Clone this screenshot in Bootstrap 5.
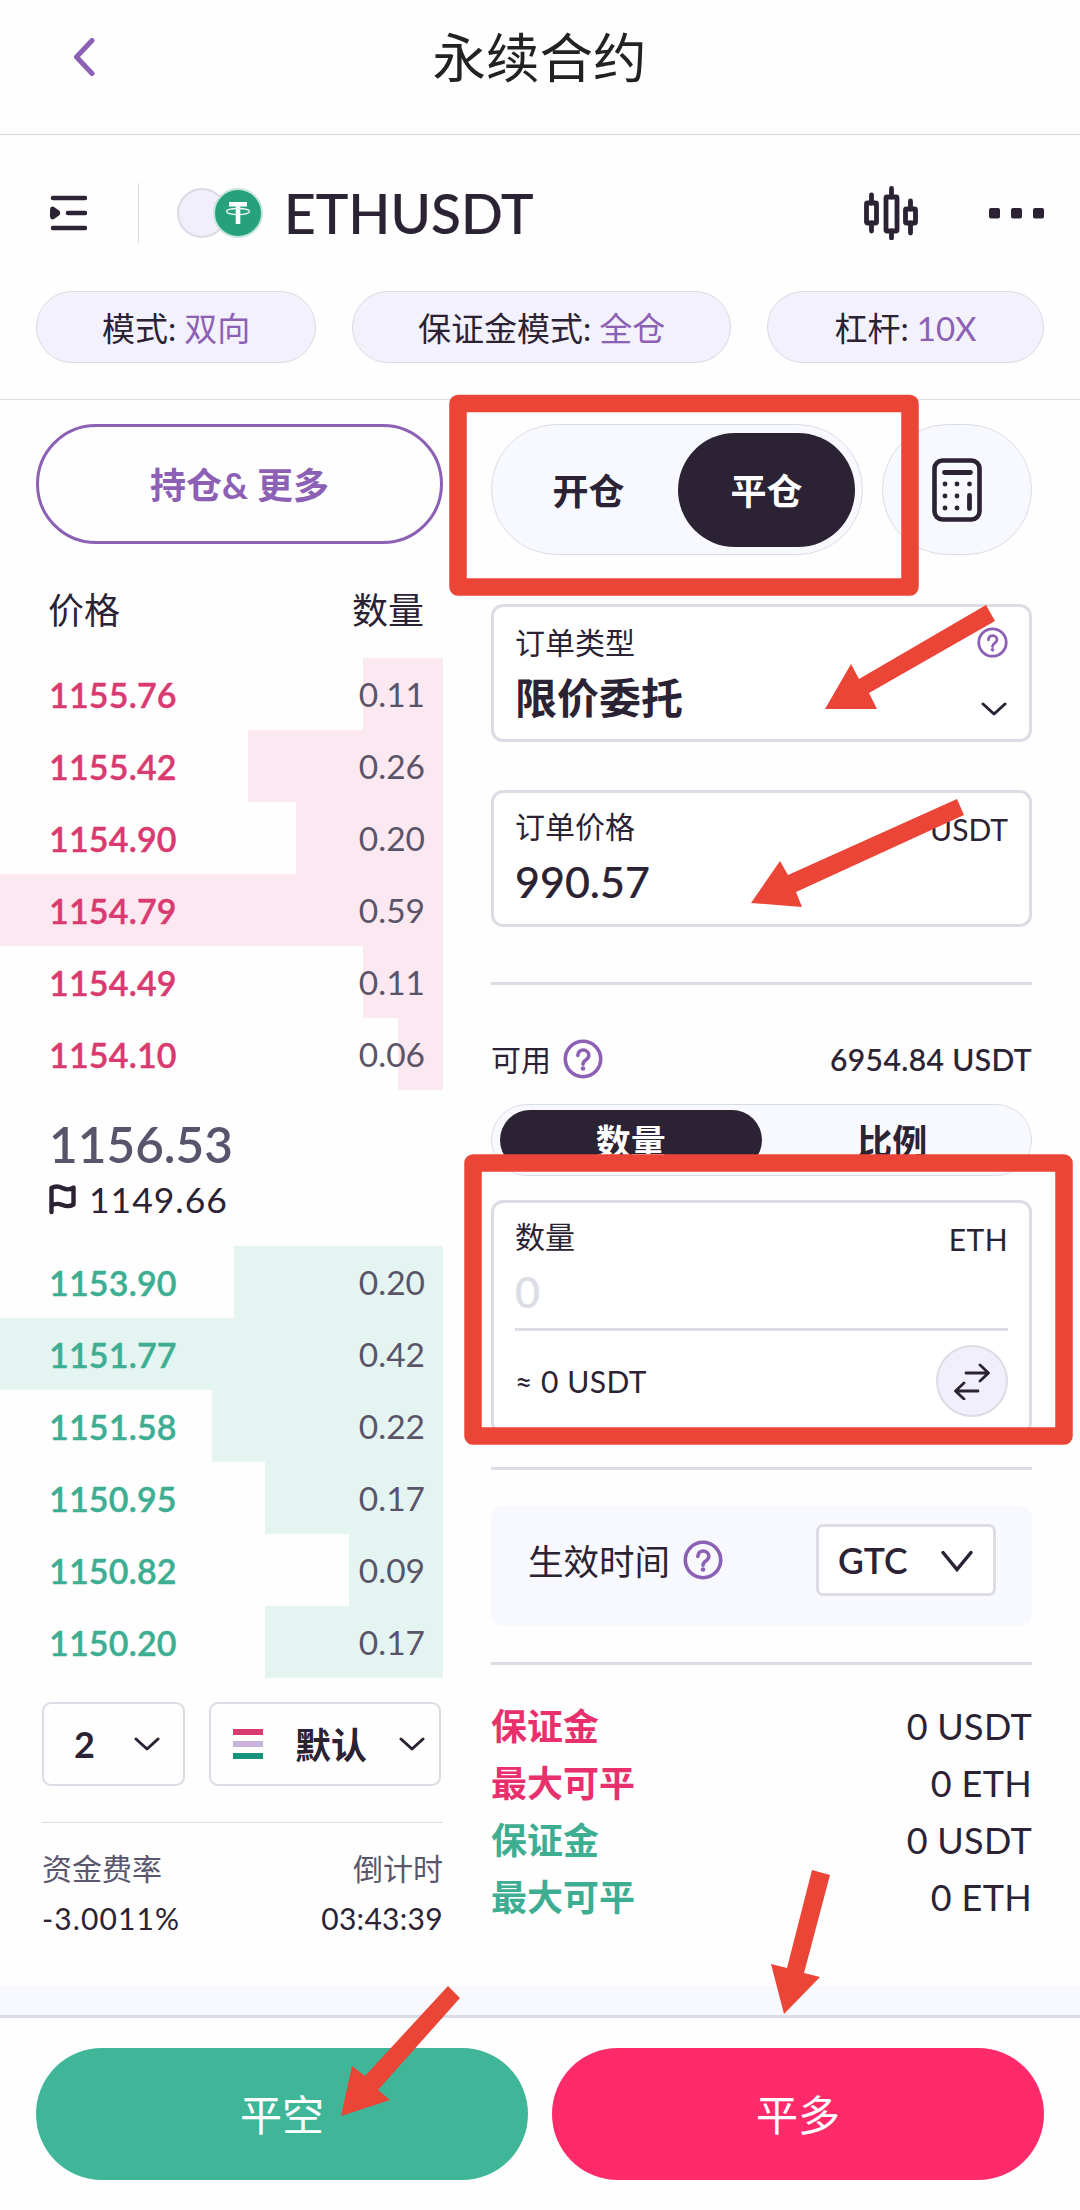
<!DOCTYPE html>
<html lang="zh-CN">
<head>
<meta charset="utf-8">
<meta name="viewport" content="width=device-width, initial-scale=1">
<title>永续合约</title>
<link href="https://cdn.jsdelivr.net/npm/bootstrap@5.3.0/dist/css/bootstrap.min.css" rel="stylesheet">
<style>
:root{--ink:#2b2233;--violet:#8c60b4;--line:#dcdce4;--soft:#f8f9fe;--mark:#ea4536;--up:#3eae92;--down:#d93a70}
body{width:1080px;height:2210px;margin:0;position:relative;overflow:hidden;background:#fefefe;color:var(--ink);font-family:Lato,"Noto Sans CJK SC",sans-serif;font-size:36px;line-height:1}
svg{display:block;flex:none}
.topbar{height:135px;border-bottom:1px solid #d8d8d8;padding:0 0 21px 73px}
.topbar h1{font-size:53.5px;margin:2px 0 0;font-weight:400;color:#222;line-height:1}
.ticker{height:265px;border-bottom:1px solid #ddd;padding:48px 36px 0}
.pair{height:60px;margin-left:13px}
.vr-line{width:1px;height:60px;background:#ddd;margin:0 38px 0 51px}
.coin{width:50px;height:50px;border-radius:50%;border:2px solid #dcdae6;background:#f1effb}
.coin-t{background:#27a17c;border:2.5px solid #c3e5db;margin-left:-14px}
.symbol{font-size:55px;font-weight:500;margin-left:21px;-webkit-text-stroke:.2px var(--ink)}
.pill{height:72px;border:1px solid #dcdae2;border-radius:36px;background:#f3f1fb;font-size:33px;padding-top:2px}
.pill b{font-weight:400;color:var(--violet);margin-left:8px}
.book{width:443px}
.more{height:120px;margin:24px 0 0 36px;border:3px solid var(--violet);border-radius:60px;color:var(--violet);font-weight:700;font-size:36px;padding-top:1px}
.book-head{height:114px;padding:0 19px 0 48px}
.lvl{height:72px;padding:1px 18px 0 49px;font-size:34px;background:linear-gradient(var(--tint),var(--tint)) right/var(--w) 100% no-repeat}
.lvl b{font-weight:600;letter-spacing:.2px;-webkit-text-stroke:.4px currentColor}
.lvl span{color:#5a5468;font-size:33.5px}
.asks{--tint:#fce8f0}.asks b{color:var(--down)}
.bids{--tint:#e4f4f1}.bids b{color:var(--up)}
.mid{height:156px;padding:28px 0 0 49px}
.lastp{font-size:49.5px;font-weight:600;color:#57546c;height:53px;line-height:53px}
.markp{font-size:35.5px;height:57px;gap:13px;letter-spacing:1px}
.pick{height:84px;border:2px solid var(--line);border-radius:9px;font-weight:700;font-size:36px}
.stripes i{display:block;width:30px;height:6px;margin:6px 0}
.fund{margin:36px 0 0 42px;border-top:1px solid #ddd;padding-top:30px;font-size:30px}
.form-col{width:541px;margin-left:48px;padding-top:24px}
.seg{background:var(--soft);border:1px solid #dcdce6;font-weight:700}
.seg .on{background:var(--ink);color:#fff}
.seg-a{width:372px;height:131px;border-radius:66px;padding:8px 7px 8px 8px}
.seg-a>div{width:177px;height:114px;border-radius:57px;padding-top:2px}
.calc{width:150px;height:131px;border-radius:66px;background:var(--soft);border:1px solid #dcdce6}
.fbox{border:3px solid var(--line);border-radius:12px;background:#fff}
.fbox .lab{font-size:30px}
.num{font-size:43px;font-weight:500;-webkit-text-stroke:.2px currentColor}
.rule{height:3px;background:var(--line)}
.seg-b{height:72px;border-radius:36px;padding:5px 8px;font-size:35px}
.seg-b>div{width:262px;height:60px;border-radius:30px;padding-top:3px}
.swap{width:72px;height:72px;border-radius:50%;border:2px solid var(--line);background:#f1effb}
.tif{height:120px;border-radius:12px;background:var(--soft);padding:18px 36px 0 37px}
.gtc{width:180px;height:72px;border:3px solid var(--line);border-radius:7px;background:#fff;font-weight:600;font-size:35.5px;padding:1px 20px 0 19px}
.sum>div{height:57px}
.sum span{letter-spacing:.3px}
.strip{height:29px;background:var(--soft)}
.foot{height:195px;border-top:3px solid var(--line);padding:30px 36px 0}
.act{width:492px;height:132px;border-radius:66px;color:#fff;font-size:42px;padding-top:2px}
.notes{left:0;top:0;pointer-events:none}
</style>
<script src="https://cdn.jsdelivr.net/npm/bootstrap@5.3.0/dist/js/bootstrap.bundle.min.js"></script>
</head>
<body class="d-flex flex-column">
<svg width="0" height="0" class="position-absolute">
  <symbol id="help" viewBox="0 0 40 40"><g fill="none" stroke="#8c60b4" stroke-width="3.6"><circle cx="20" cy="20" r="17.7"/><path d="M14.8 16.5c0-7.5 11-7 11 0 0 4.5-5.800 4.300-5.800 8.700" stroke-linecap="round"/></g><circle cx="20" cy="29.5" r="2.3" fill="#8c60b4"/></symbol>
  <symbol id="chev" viewBox="0 0 26 14"><path d="M2 2l11 10L24 2" fill="none" stroke="#2b2233" stroke-width="3" stroke-linecap="round" stroke-linejoin="round"/></symbol>
</svg>

<header class="topbar d-flex align-items-center">
  <svg width="22" height="38" viewBox="0 0 22 38"><path d="M19 2.500L3.500 19 19 35.500" fill="none" stroke="#8c60b4" stroke-width="5" stroke-linecap="round" stroke-linejoin="round"/></svg>
  <h1 class="text-center flex-grow-1 pe-5 me-5">永续合约</h1>
</header>

<section class="ticker">
  <div class="pair d-flex align-items-center">
    <svg width="38" height="36" viewBox="0 0 38 36" fill="none" stroke="#2b2233" stroke-width="4.600" stroke-linecap="round"><path d="M4 3h32M19 18h17M4 33h32"/><path d="M1 14.500v7q.5 4 4 2.500l5-3.500q2.500-2.500 0-5L5 12q-3.500-1.500-4 2.500" fill="#2b2233" stroke="none"/></svg>
    <div class="vr-line"></div>
    <div class="coin"></div>
    <div class="coin coin-t d-flex align-items-center justify-content-center">
      <svg width="26" height="24" viewBox="0 0 26 24"><path d="M4 1h18v4.500h-6.700V23h-4.600V5.500H4z" fill="#fff"/><ellipse cx="13" cy="10.500" rx="11.500" ry="3" fill="none" stroke="#e4f5ef" stroke-width="1.300"/></svg>
    </div>
    <div class="symbol">ETHUSDT</div>
    <svg class="ms-auto" width="54" height="54" viewBox="0 0 54 54" fill="none" stroke="#2b2233" stroke-width="4.800" stroke-linecap="round"><rect x="2.500" y="17" width="10" height="20" rx="1"/><path d="M7.500 9v8M7.500 37v8"/><rect x="22" y="11" width="11" height="34" rx="1"/><path d="M27.500 2.500V11M27.500 45v7"/><rect x="41.500" y="23" width="10" height="14" rx="1"/><path d="M46.500 15v8M46.500 37v10"/></svg>
    <svg style="margin-left:71px" width="55" height="11" viewBox="0 0 55 11" fill="#2b2233"><rect width="11" height="10.500" rx="2"/><rect x="22" width="11" height="10.500" rx="2"/><rect x="44" width="11" height="10.500" rx="2"/></svg>
  </div>
  <div class="d-flex justify-content-between" style="margin-top:48px">
    <div class="pill d-flex align-items-center justify-content-center" style="width:280px">模式:<b>双向</b></div>
    <div class="pill d-flex align-items-center justify-content-center" style="width:379px">保证金模式:<b>全仓</b></div>
    <div class="pill d-flex align-items-center justify-content-center" style="width:277px">杠杆:<b>10X</b></div>
  </div>
</section>

<main class="d-flex" style="height:1586px">
  <section class="book">
    <div class="more d-flex align-items-center justify-content-center">持仓&amp; 更多</div>
    <div class="book-head d-flex justify-content-between align-items-center"><span style="padding-top:18px">价格</span><span style="padding-top:18px">数量</span></div>
    <div class="asks">
      <div class="lvl d-flex justify-content-between align-items-center" style="--w:80px"><b>1155.76</b><span>0.11</span></div>
      <div class="lvl d-flex justify-content-between align-items-center" style="--w:195px"><b>1155.42</b><span>0.26</span></div>
      <div class="lvl d-flex justify-content-between align-items-center" style="--w:147px"><b>1154.90</b><span>0.20</span></div>
      <div class="lvl d-flex justify-content-between align-items-center" style="--w:443px"><b>1154.79</b><span>0.59</span></div>
      <div class="lvl d-flex justify-content-between align-items-center" style="--w:80px"><b>1154.49</b><span>0.11</span></div>
      <div class="lvl d-flex justify-content-between align-items-center" style="--w:45px"><b>1154.10</b><span>0.06</span></div>
    </div>
    <div class="mid">
      <div class="lastp">1156.53</div>
      <div class="markp d-flex align-items-center">
        <svg width="27" height="31" viewBox="0 0 27 31" fill="none" stroke="#2b2233" stroke-width="4.400" stroke-linecap="round" stroke-linejoin="round"><path d="M2.500 28V4q5-3 11 0t11-.5v17q-5 3-11 .5t-11 .5"/></svg>
        <span>1149.66</span>
      </div>
    </div>
    <div class="bids">
      <div class="lvl d-flex justify-content-between align-items-center" style="--w:209px"><b>1153.90</b><span>0.20</span></div>
      <div class="lvl d-flex justify-content-between align-items-center" style="--w:443px"><b>1151.77</b><span>0.42</span></div>
      <div class="lvl d-flex justify-content-between align-items-center" style="--w:231px"><b>1151.58</b><span>0.22</span></div>
      <div class="lvl d-flex justify-content-between align-items-center" style="--w:178px"><b>1150.95</b><span>0.17</span></div>
      <div class="lvl d-flex justify-content-between align-items-center" style="--w:94px"><b>1150.82</b><span>0.09</span></div>
      <div class="lvl d-flex justify-content-between align-items-center" style="--w:178px"><b>1150.20</b><span>0.17</span></div>
    </div>
    <div class="d-flex" style="margin:24px 0 0 42px;gap:24px">
      <div class="pick d-flex align-items-center justify-content-between" style="width:143px;padding:0 23px 0 30px">2<svg width="26" height="14"><use href="#chev"/></svg></div>
      <div class="pick d-flex align-items-center" style="width:232px;padding-left:22px"><div class="stripes"><i style="background:#d93a70"></i><i style="background:#c9b3dc"></i><i style="background:#17957c"></i></div><span style="margin:2px 32px 0 32px">默认</span><svg width="26" height="14"><use href="#chev"/></svg></div>
    </div>
    <div class="fund">
      <div class="d-flex justify-content-between" style="color:#5a566e"><span>资金费率</span><span>倒计时</span></div>
      <div class="d-flex justify-content-between" style="margin-top:20px"><span style="letter-spacing:1.1px">-3.0011%</span><span style="letter-spacing:.3px">03:43:39</span></div>
    </div>
  </section>

  <section class="form-col">
    <div class="d-flex justify-content-between">
      <div class="seg seg-a d-flex justify-content-between">
        <div class="d-flex align-items-center justify-content-center">开仓</div>
        <div class="on d-flex align-items-center justify-content-center">平仓</div>
      </div>
      <div class="calc d-flex align-items-center justify-content-center">
        <svg width="50" height="64" viewBox="0 0 50 64"><rect x="2.500" y="2.500" width="45" height="59" rx="8" fill="none" stroke="#2b2233" stroke-width="4.600"/><g fill="none" stroke="#2b2233" stroke-width="4.800" stroke-linecap="round"><path d="M12.500 14.500h26M37.500 37.500v13"/><path d="M13 26v.1M25 26v.1M37.500 26v.1M13 38v.1M25 38v.1M13 50v.1M25 50v.1"/></g></svg>
      </div>
    </div>
    <div class="fbox d-flex justify-content-between" style="height:138px;margin-top:49px;padding:20px 21px 0 21px">
      <div><div class="lab">订单类型</div><div class="fw-bold" style="font-size:42px;margin-top:20px">限价委托</div></div>
      <div class="d-flex flex-column align-items-center"><svg width="31" height="31"><use href="#help"/></svg><svg style="margin:44px 0 0 2px" width="26" height="14"><use href="#chev"/></svg></div>
    </div>
    <div class="fbox d-flex justify-content-between" style="height:137px;margin-top:48px;padding:18px 21px 0 21px">
      <div><div class="lab">订单价格</div><div class="num" style="margin-top:19px">990.57</div></div>
      <div class="lab" style="margin-top:3px">USDT</div>
    </div>
    <div class="rule" style="margin-top:55px"></div>
    <div class="d-flex align-items-center" style="height:40px;margin-top:54px;font-size:30px">可用<svg style="margin-left:12px" width="40" height="40"><use href="#help"/></svg><span class="ms-auto" style="font-weight:500;letter-spacing:.4px;-webkit-text-stroke:.2px currentColor">6954.84 USDT</span></div>
    <div class="seg seg-b d-flex justify-content-between" style="margin-top:25px">
      <div class="on d-flex align-items-center justify-content-center">数量</div>
      <div class="d-flex align-items-center justify-content-center">比例</div>
    </div>
    <div class="fbox" style="height:235px;margin-top:24px;padding:18px 21px 0 21px">
      <div class="d-flex justify-content-between lab"><span>数量</span><span style="margin-top:3px;letter-spacing:.4px">ETH</span></div>
      <div class="num" style="color:#dcdce4;margin-top:16px">0</div>
      <div class="rule" style="margin-top:15px"></div>
      <div class="d-flex justify-content-between align-items-center" style="margin-top:14px;font-size:30px"><span style="letter-spacing:.5px">≈ 0 USDT</span>
        <div class="swap d-flex align-items-center justify-content-center"><svg width="36" height="38" viewBox="0 0 36 38" fill="none" stroke="#2b2233" stroke-width="2.800" stroke-linecap="round" stroke-linejoin="round"><path d="M12 11h22M26 3l8.500 8-8.500 8M24 29H2M10 21l-8.500 8 8.500 8"/></svg></div>
      </div>
    </div>
    <div class="rule" style="margin-top:32px"></div>
    <div class="tif d-flex justify-content-between" style="margin-top:36px">
      <div class="d-flex align-items-center" style="height:72px;font-size:35.500px"><span style="margin-top:3px">生效时间</span><svg style="margin-left:13px" width="40" height="40"><use href="#help"/></svg></div>
      <div class="gtc d-flex align-items-center justify-content-between">GTC<svg width="32" height="22" viewBox="0 0 32 22"><path d="M2 2.500l14 17 14-17" fill="none" stroke="#2b2233" stroke-width="3.500" stroke-linecap="round"/></svg></div>
    </div>
    <div class="rule" style="margin-top:36px"></div>
    <div class="sum" style="margin-top:32px">
      <div class="d-flex justify-content-between align-items-center"><b style="color:#e8306d">保证金</b><span>0 USDT</span></div>
      <div class="d-flex justify-content-between align-items-center"><b style="color:#e8306d">最大可平</b><span>0 ETH</span></div>
      <div class="d-flex justify-content-between align-items-center"><b style="color:#3eae92">保证金</b><span>0 USDT</span></div>
      <div class="d-flex justify-content-between align-items-center"><b style="color:#3eae92">最大可平</b><span>0 ETH</span></div>
    </div>
  </section>
</main>

<div class="strip"></div>
<footer class="foot d-flex justify-content-between">
  <div class="act d-flex align-items-center justify-content-center" style="background:#3eb697">平空</div>
  <div class="act d-flex align-items-center justify-content-center" style="background:#ff2a69">平多</div>
</footer>

<!-- tutorial highlights floating over the screen -->
<svg class="notes position-absolute" width="1080" height="2210" viewBox="0 0 1080 2210">
  <g fill="none" stroke="#ea4536" stroke-width="17.500" stroke-linejoin="round"><path d="M458 403.500H910V587H458z"/><path d="M473 1163H1064V1436H473z"/></g>
  <g fill="#ea4536">
    <path d="M825 709L851 664 859 679 986 605 995 621 869 693 877 709z"/>
    <path d="M751 903L780 861 788 875 957 799 964 815 796 892 802 907z"/>
    <path d="M341 2116L352 2066 365 2076 448 1986 460 1998 378 2090 390 2100z"/>
    <path d="M784 2014L771 1964 787 1968 812 1870 830 1875 804 1973 820 1977z"/>
  </g>
</svg>
</body>
</html>
